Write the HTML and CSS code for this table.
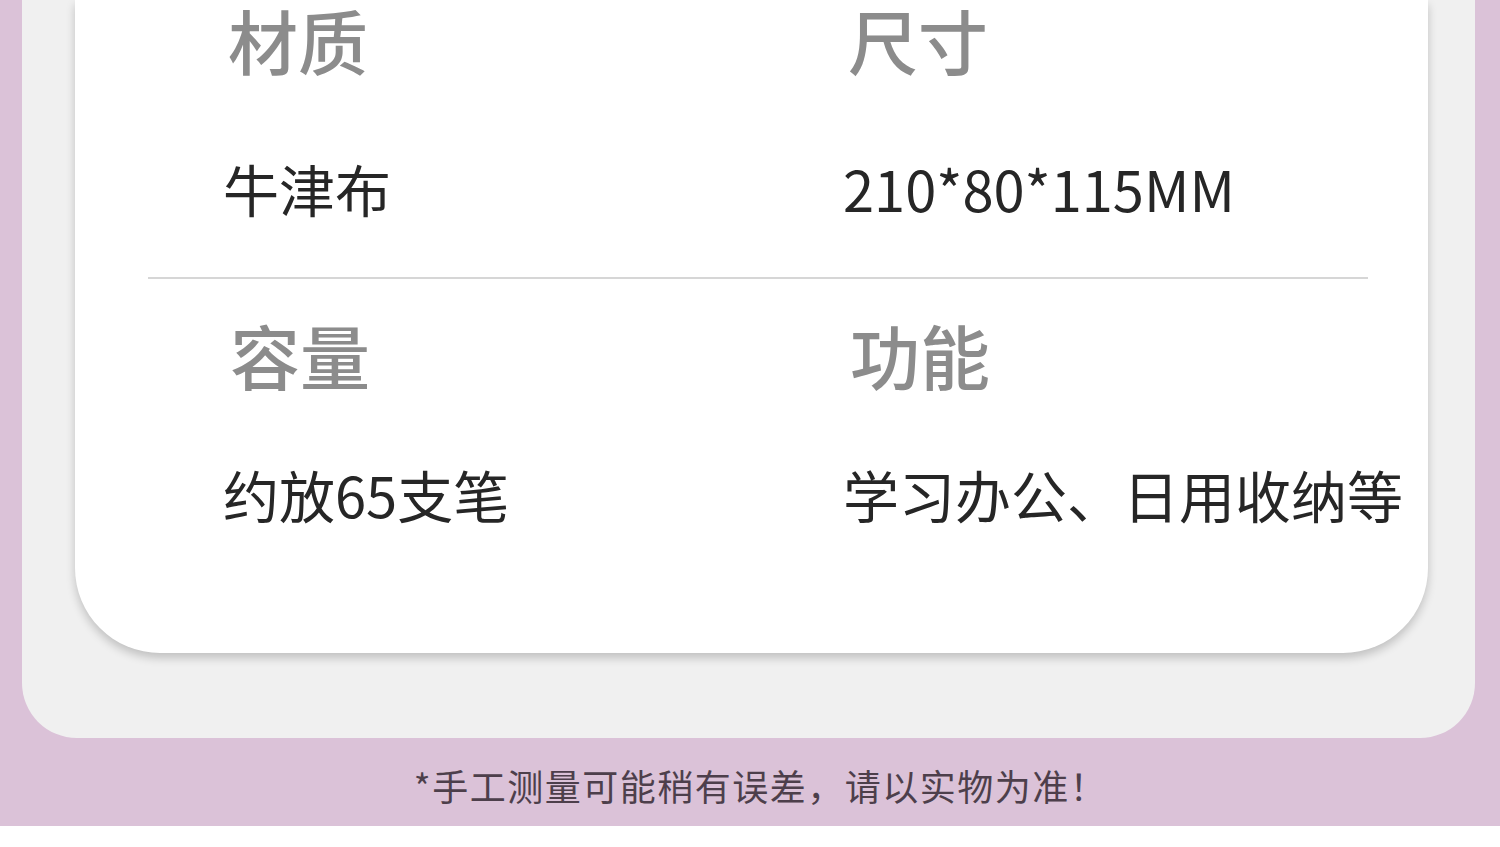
FILE: index.html
```html
<!DOCTYPE html>
<html lang="zh-CN">
    <head>
        <meta charset="utf-8">
        <title>产品参数</title>
        <link rel="stylesheet" href="styles.css">
    </head>
    <body>
        <div class="frame">
            <div class="panel">
                <div class="card">
                    <div class="spec-row first">
                        <div class="spec">
                            <h2 class="spec-title">材质</h2>
                            <p class="spec-value">牛津布</p>
                        </div>
                        <div class="spec">
                            <h2 class="spec-title">尺寸</h2>
                            <p class="spec-value">210*80*115MM</p>
                        </div>
                    </div>
                    <div class="divider"></div>
                    <div class="spec-row second">
                        <div class="spec">
                            <h2 class="spec-title">容量</h2>
                            <p class="spec-value">约放65支笔</p>
                        </div>
                        <div class="spec">
                            <h2 class="spec-title">功能</h2>
                            <p class="spec-value">学习办公、日用收纳等</p>
                        </div>
                    </div>
                </div>
            </div>
            <div class="note">*手工测量可能稍有误差，请以实物为准！</div>
        </div>
    </body>
</html>
```

FILE: styles.css
```css
body{
    margin: 0;
    background: #ffffff;
    font-family: "Noto Sans CJK SC", "Noto Sans", sans-serif;
}

.frame{
    height: 826px;
    padding: 0 25px 0 22px;
    background: #dbc2d8;
    display: flex;
    flex-direction: column;
}

.panel{
    height: 738px;
    background: #f0f0f0;
    border-radius: 0 0 55px 55px;
    padding: 0 47px 0 53px;
}

.card{
    background: #ffffff;
    border-radius: 0 0 85px 85px;
    box-shadow: 0 5px 10px rgba(0, 0, 0, 0.2);
    padding: 0 0 124px 0;
}

.spec-row{
    display: grid;
    grid-template-columns: 620px 1fr;
    padding-left: 150px;
}

.spec-title{
    margin: 0;
    font-size: 70px;
    line-height: 76px;
    font-weight: 500;
    color: #8c8c8c;
    padding-left: 3px;
}

.second .spec-title{
    padding-left: 5px;
}

.first .spec-title{
    padding-top: 2px;
}

.spec-value{
    margin: 0;
    font-size: 56px;
    line-height: 70px;
    font-weight: 400;
    color: #262626;
    margin-left: -2px;
}

.first .spec-value{
    margin-top: 75px;
}

.second .spec-value{
    margin-top: 66px;
}

.divider{
    height: 2px;
    background: #d6d6d6;
    margin: 54px 60px 0 73px;
}

.second{
    padding-top: 38px;
}

.note{
    flex: 1;
    display: flex;
    align-items: center;
    justify-content: center;
    padding-top: 6px;
    padding-left: 24px;
    font-size: 36px;
    letter-spacing: 1.5px;
    color: #4d3f4b;
}
```
